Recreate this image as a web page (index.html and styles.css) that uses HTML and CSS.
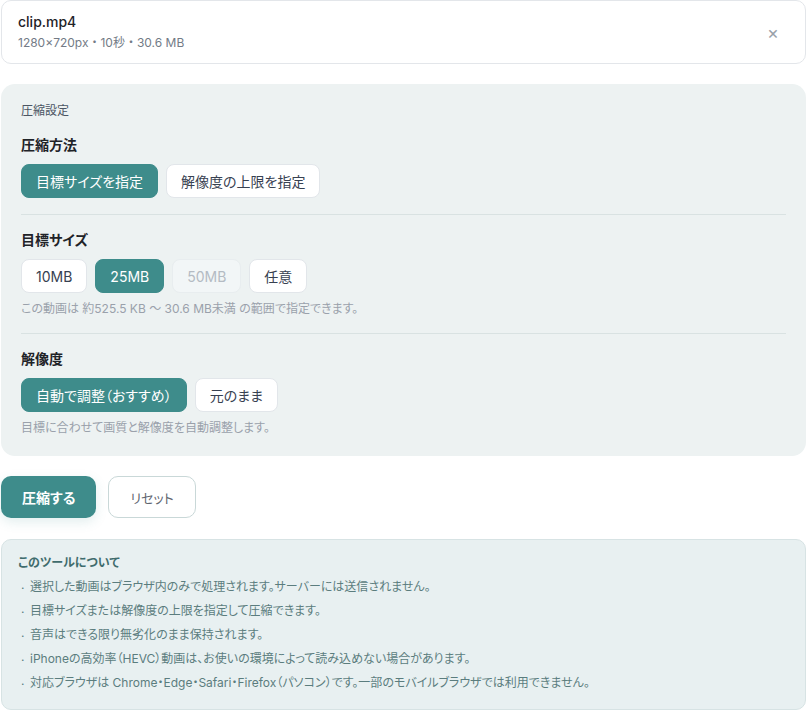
FILE: index.html
```html
<!DOCTYPE html>
<html lang="ja">
<head>
  <meta charset="utf-8">
  <title>動画圧縮</title>
  <link rel="stylesheet" href="styles.css">
</head>
<body>

<div class="page">
  <div class="file-card">
    <div class="file-info">
      <div class="file-name">clip.mp4</div>
      <div class="file-meta">1280×720px・10秒・30.6 MB</div>
    </div>
    <button class="close-btn" aria-label="閉じる">×</button>
  </div>

  <div class="settings">
    <div class="settings-title">圧縮設定</div>

    <div class="group">
      <div class="group-label">圧縮方法</div>
      <div class="options">
        <button class="opt active">目標サイズを指定</button>
        <button class="opt">解像度の上限を指定</button>
      </div>
    </div>

    <div class="group">
      <div class="group-label">目標サイズ</div>
      <div class="options">
        <button class="opt">10MB</button>
        <button class="opt active">25MB</button>
        <button class="opt" disabled>50MB</button>
        <button class="opt">任意</button>
      </div>
      <p class="hint">この動画は 約525.5 KB 〜 30.6 MB未満 の範囲で指定できます。</p>
    </div>

    <div class="group">
      <div class="group-label">解像度</div>
      <div class="options">
        <button class="opt active">自動で調整（おすすめ）</button>
        <button class="opt">元のまま</button>
      </div>
      <p class="hint">目標に合わせて画質と解像度を自動調整します。</p>
    </div>
  </div>

  <div class="actions">
    <button class="primary">圧縮する</button>
    <button class="secondary">リセット</button>
  </div>

  <div class="about">
    <div class="about-title">このツールについて</div>
    <ul>
      <li>選択した動画はブラウザ内のみで処理されます。サーバーには送信されません。</li>
      <li>目標サイズまたは解像度の上限を指定して圧縮できます。</li>
      <li>音声はできる限り無劣化のまま保持されます。</li>
      <li>iPhoneの高効率（HEVC）動画は、お使いの環境によって読み込めない場合があります。</li>
      <li>対応ブラウザは Chrome・Edge・Safari・Firefox（パソコン）です。一部のモバイルブラウザでは利用できません。</li>
    </ul>
  </div>
</div>

</body>
</html>
```

FILE: styles.css
```css
body {
  margin: 0;
  font-family: Inter, 'Noto Sans CJK JP', sans-serif;
  font-feature-settings: "palt";
  color: #1f2937;
  background: white;
}

.page {
  padding: 0 1px;
}

button {
  font-family: inherit;
  font-feature-settings: "palt";
  cursor: pointer;
}

.file-card {
  display: flex;
  align-items: center;
  justify-content: space-between;
  height: 62px;
  padding: 0 16px;
  border: 1px solid #e3e6ea;
  border-radius: 10px;
}

.file-name {
  font-size: 14px;
  font-weight: 500;
  color: #1f2328;
  line-height: 20px;
}

.file-meta {
  font-size: 12px;
  font-feature-settings: normal;
  color: #737b86;
  line-height: 18px;
  margin-top: 2px;
}

.close-btn {
  background: none;
  border: none;
  font-size: 18px;
  color: #9aa1aa;
  margin-right: 4px;
  padding: 0 6px;
}

.settings {
  margin-top: 20px;
  background: #edf2f2;
  border-radius: 14px;
  padding: 18px 20px 20px;
}

.settings-title {
  font-size: 12px;
  color: #4b5563;
  line-height: 18px;
}

.group {
  padding: 15px 0 0;
}

.group + .group {
  margin-top: 16px;
  border-top: 1px solid #d9e2e2;
  padding-top: 15px;
}

.group-label {
  font-size: 14px;
  font-weight: 700;
  color: #1f2328;
  line-height: 20px;
  margin-bottom: 9px;
}

.options {
  display: flex;
  gap: 8px;
}

.opt {
  height: 34px;
  padding: 0 14px;
  font-size: 14px;
  color: #374151;
  background: white;
  border: 1px solid #e2e6ea;
  border-radius: 8px;
}

.opt.active {
  background: #3e8c8b;
  border-color: #3e8c8b;
  color: white;
}

.opt:disabled {
  background: #f2f6f7;
  border-color: #e8edef;
  color: #b4bbc3;
  cursor: default;
}

.hint {
  margin: 8px 0 0;
  font-size: 12px;
  color: #9aa1ab;
  line-height: 16px;
}

.actions {
  display: flex;
  gap: 12px;
  margin-top: 20px;
}

.primary {
  height: 42px;
  padding: 0 21px;
  font-size: 14px;
  font-weight: 700;
  color: white;
  background: #3e8c8b;
  border: none;
  border-radius: 10px;
  box-shadow: 0 4px 12px rgba(62, 140, 139, 0.15);
}

.secondary {
  height: 42px;
  padding: 0 21px;
  font-size: 13px;
  color: #5f6670;
  background: white;
  border: 1px solid #c9d8d8;
  border-radius: 10px;
}

.about {
  margin-top: 21px;
  background: #e8f0f1;
  border: 1px solid #d7e3e4;
  border-radius: 10px;
  padding: 14px 16px 14px;
}

.about-title {
  font-size: 12px;
  font-weight: 700;
  color: #3f6c6d;
  line-height: 18px;
}

.about ul {
  list-style: none;
  margin: 3px 0 0;
  padding: 0;
}

.about li {
  position: relative;
  padding-left: 12px;
  font-size: 12px;
  color: #5b7d7e;
  line-height: 24px;
}

.about li::before {
  content: ".";
  position: absolute;
  left: 3px;
  top: -2px;
}
```
